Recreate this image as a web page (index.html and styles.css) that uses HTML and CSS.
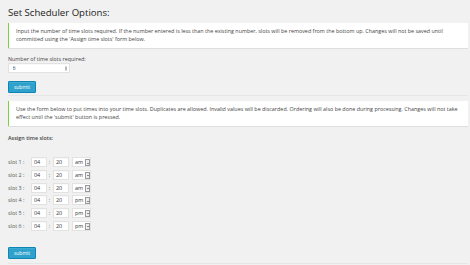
FILE: index.html
```html
<!DOCTYPE html>
<html lang="en">
<head>
    <meta charset="UTF-8">
    <meta name="viewport" content="width=device-width, initial-scale=1.0">
    <title>Set Scheduler Options</title>
    <link rel="stylesheet" href="styles.css">
</head>
<body>
    <div class="wrap">
        <h2>Set Scheduler Options:</h2>

        <form class="slot-count">
            <div class="notice">
                <p>Input the number of time slots required. If the number entered is less than the existing number, slots will be removed from the bottom up. Changes will not be saved until committed using the 'Assign time slots' form below.</p>
            </div>
            <label for="num-slots">Number of time slots required:</label>
            <div class="number-field">
                <input type="text" id="num-slots" value="6">
                <span class="spin"></span>
            </div>
            <button type="button" class="button-primary">submit</button>
        </form>

        <form class="slot-times">
            <div class="notice">
                <p>Use the form below to put times into your time slots. Duplicates are allowed. Invalid values will be discarded. Ordering will also be done during processing. Changes will not take effect until the 'submit' button is pressed.</p>
            </div>
            <p class="assign">Assign time slots:</p>

            <div class="slots">
                <div class="slot"><span class="slot-name">slot 1 :</span><input type="text" value="04"><span class="colon">:</span><input type="text" value="20"><span class="ampm">am<i></i></span></div>
                <div class="slot"><span class="slot-name">slot 2 :</span><input type="text" value="04"><span class="colon">:</span><input type="text" value="20"><span class="ampm">am<i></i></span></div>
                <div class="slot"><span class="slot-name">slot 3 :</span><input type="text" value="04"><span class="colon">:</span><input type="text" value="20"><span class="ampm">am<i></i></span></div>
                <div class="slot"><span class="slot-name">slot 4 :</span><input type="text" value="04"><span class="colon">:</span><input type="text" value="20"><span class="ampm">pm<i></i></span></div>
                <div class="slot"><span class="slot-name">slot 5 :</span><input type="text" value="04"><span class="colon">:</span><input type="text" value="20"><span class="ampm">pm<i></i></span></div>
                <div class="slot"><span class="slot-name">slot 6 :</span><input type="text" value="04"><span class="colon">:</span><input type="text" value="20"><span class="ampm">pm<i></i></span></div>
            </div>

            <button type="button" class="button-primary submit-times">submit</button>
        </form>
    </div>
</body>
</html>
```

FILE: styles.css
```css
/* scaled-down admin options page */
body {
    font-family: "Open Sans", sans-serif;
    margin: 0;
    padding: 0;
    background-color: #f1f1f1;
    color: #444;
    font-size: 5.4px;
}
.wrap {
    padding: 0 2px 0 8px;
}
h2 {
    font-size: 9.6px;
    font-weight: 400;
    line-height: 14px;
    margin: 0;
    padding: 6px 0 2px 0;
    color: #222;
}
form {
    border-bottom: 1px solid #e6e6e6;
}
.notice {
    background-color: #fff;
    border-left: 1.5px solid #7ad03a;
    box-shadow: 0 0.5px 0.5px rgba(0, 0, 0, 0.08);
    padding: 3.5px 6px 3.5px 7px;
}
.notice p {
    margin: 0;
    line-height: 8.8px;
}
.slot-count {
    padding: 1px 0 2px 0;
}
.slot-count label {
    display: block;
    margin-top: 7px;
    line-height: 8px;
    color: #444;
}
.number-field {
    position: relative;
    width: 62px;
    margin-top: 0.5px;
}
input {
    font-family: "Open Sans", sans-serif;
    font-size: 5.4px;
    color: #333;
    background-color: #fff;
    border: 0.5px solid #e2e2e2;
    box-shadow: inset 0 0.5px 1px rgba(0, 0, 0, 0.05);
    box-sizing: border-box;
    height: 10px;
    padding: 0 3px;
    margin: 0;
    outline: none;
}
.number-field input {
    width: 62px;
    padding-left: 3.5px;
}
.spin {
    position: absolute;
    right: 3px;
    top: 2.5px;
    width: 2.5px;
    height: 5px;
    border: 0.5px solid #bbb;
    border-radius: 1px;
    box-sizing: border-box;
}
.button-primary {
    display: block;
    font-family: "Open Sans", sans-serif;
    font-size: 5px;
    color: #fff;
    background-color: #2ea2cc;
    border: 0.5px solid #0e86b3;
    border-radius: 1px;
    box-shadow: inset 0 0.5px 0 rgba(120, 200, 230, 0.5);
    width: 28px;
    height: 12px;
    padding: 0;
    margin-top: 8px;
    line-height: 10px;
}
.submit-times {
    margin-top: 16px;
}
.slot-times {
    padding-top: 5px;
    padding-bottom: 4px;
}
.assign {
    font-weight: 600;
    margin: 8px 0 0 0;
    line-height: 9px;
}
.slots {
    margin-top: 14.5px;
    display: flex;
    flex-direction: column;
    gap: 2.7px;
}
.slot {
    display: flex;
    align-items: center;
    height: 10px;
}
.slot-name {
    width: 22.5px;
    color: #555;
}
.slot input {
    width: 16px;
    padding-left: 2.5px;
}
.colon {
    width: 6px;
    text-align: center;
    color: #666;
}
.ampm {
    position: relative;
    margin-left: 3.5px;
    width: 19px;
    height: 10px;
    box-sizing: border-box;
    background-color: #fff;
    border: 0.5px solid #e2e2e2;
    padding-left: 2px;
    line-height: 9.5px;
    color: #333;
}
.ampm i {
    position: absolute;
    right: 0.5px;
    top: 1px;
    width: 4.5px;
    height: 7px;
    border: 0.5px solid #999;
    background-color: #eee;
    box-sizing: border-box;
}
.ampm i::after {
    content: "";
    position: absolute;
    left: 1px;
    top: 2.5px;
    border-left: 1px solid transparent;
    border-right: 1px solid transparent;
    border-top: 1.2px solid #222;
}
```
